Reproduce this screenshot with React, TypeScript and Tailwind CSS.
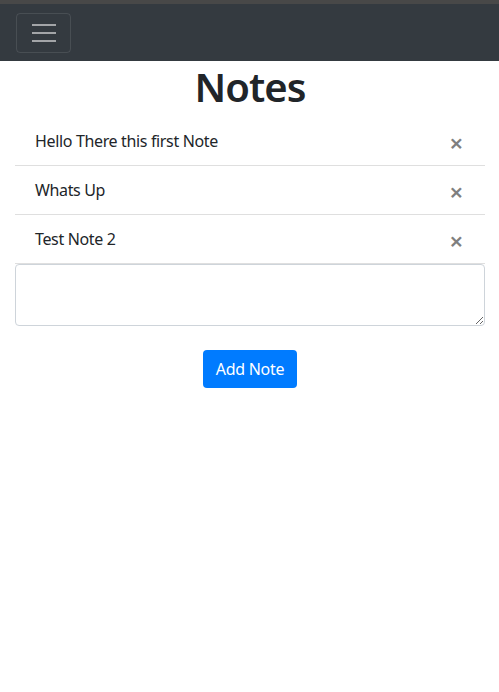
const notes = ["Hello There this first Note", "Whats Up", "Test Note 2"];

export default function App() {
  return (
    <div className="min-h-[692px] bg-white font-['Noto_Sans',sans-serif] text-[#212529]">
      <div className="h-[4px] bg-[#484848]" />
      <nav className="flex h-[57px] items-center bg-[#343a40] px-4">
        <button className="flex h-[40px] w-[55px] flex-col items-center justify-center gap-[6px] rounded border border-white/10">
          <span className="block h-[2px] w-[24px] bg-[#a3a5a8]" />
          <span className="block h-[2px] w-[24px] bg-[#a3a5a8]" />
          <span className="block h-[2px] w-[24px] bg-[#a3a5a8]" />
        </button>
      </nav>
      <div className="pl-[15px] pr-[14px]">
        <h1 className="mt-[2px] mb-[6px] text-center text-[40px] leading-[48px] font-semibold tracking-[-1px]">
          Notes
        </h1>
        <ul>
          {notes.map((n) => (
            <li
              key={n}
              className="flex h-[49px] items-center justify-between border-b border-[#dfdfdf] pl-5 pr-[22px] text-[16px] tracking-[-0.35px]"
            >
              <span>{n}</span>
              <span className="mt-[4px] text-[24px] font-semibold leading-none text-[#7f7f7f]">×</span>
            </li>
          ))}
        </ul>
        <textarea className="block h-[62px] w-full resize-y rounded border border-[#ced4da] px-3 py-1.5 outline-none" />
        <div className="mt-[24px] flex justify-center">
          <button className="h-[38px] w-[94px] rounded bg-[#007bff] text-[16px] tracking-[-0.3px] text-white">
            Add Note
          </button>
        </div>
      </div>
    </div>
  );
}
